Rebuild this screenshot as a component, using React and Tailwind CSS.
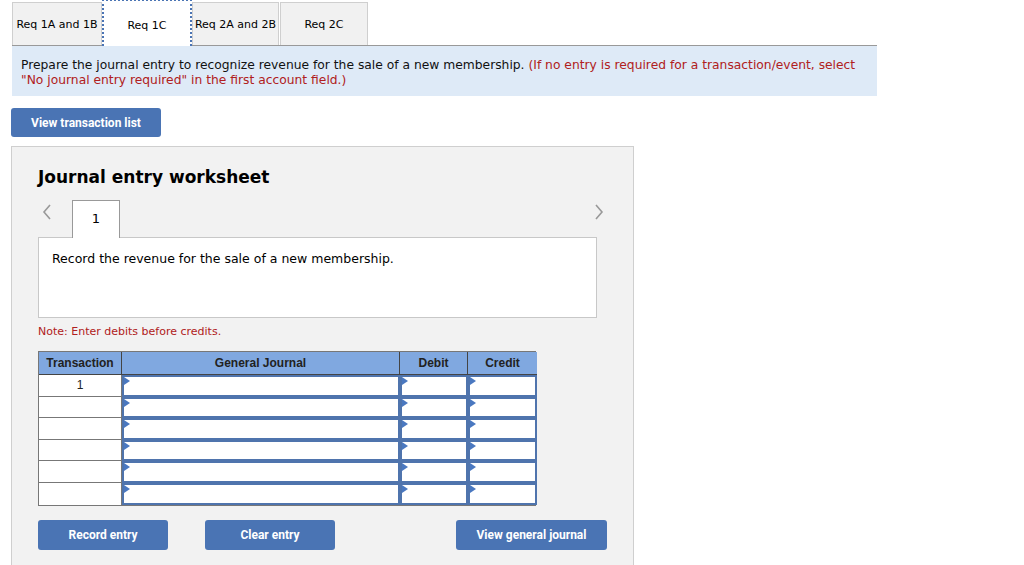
import React from 'react';

const tabs = ['Req 1A and 1B', 'Req 1C', 'Req 2A and 2B', 'Req 2C'];

// маленький треугольник в углу поля ввода
const Marker = () => (
  <span className="absolute left-0 top-0 w-0 h-0 border-t-[4px] border-b-[4px] border-l-[6px] border-t-transparent border-b-transparent border-l-[#4a78c0]" />
);

const InputCell = () => (
  <div className="relative h-full bg-white border-2 border-[#4f74ad]">
    <Marker />
  </div>
);

const Worksheet = () => {
  const rows = ['1', '', '', '', '', ''];

  return (
    <div className="ml-[11px] mt-[9px] w-[623px] h-[420px] bg-[#f2f2f2] border border-[#cfcfcf] pl-[26px] pr-[36px] pt-[18px]">
      <h2 className="text-[17px] font-bold text-black" style={{ fontFamily: '"DejaVu Sans", Verdana, sans-serif' }}>
        Journal entry worksheet
      </h2>

      {/* навигация по записям */}
      <div className="mt-[8px] flex items-end justify-between h-[38px]">
        <div className="flex items-end">
          <svg width="12" height="18" viewBox="0 0 12 18" className="ml-[3px] mb-[16px]">
            <path d="M9 2 L3 9 L9 16" stroke="#999" strokeWidth="1.6" fill="none" />
          </svg>
          <div className="ml-[19px] w-[48px] h-[38px] bg-white border border-[#999] border-b-0 flex items-center justify-center text-[13px] text-black relative z-10 -mb-px">
            1
          </div>
        </div>
        <svg width="12" height="18" viewBox="0 0 12 18" className="mb-[16px] mr-[-8px]">
          <path d="M3 2 L9 9 L3 16" stroke="#999" strokeWidth="1.6" fill="none" />
        </svg>
      </div>

      <div className="h-[81px] bg-white border border-[#c8c8c8] px-[13px] pt-[12px] text-[12.5px] text-black">
        Record the revenue for the sale of a new membership.
      </div>

      <p className="mt-[6px] text-[11px] text-[#b02020]">Note: Enter debits before credits.</p>

      {/* таблица журнала */}
      <div className="mt-[11px] w-[498px] grid grid-cols-[83px_278px_68px_69px] border border-[#777]" style={{ fontFamily: '"Liberation Sans", Arial, sans-serif' }}>
        <div className="h-[23px] bg-[#80a8e0] border-r border-b border-[#444] flex items-center justify-center text-[12px] font-bold text-[#222]">Transaction</div>
        <div className="h-[23px] bg-[#80a8e0] border-r border-b border-[#444] flex items-center justify-center text-[12px] font-bold text-[#222]">General Journal</div>
        <div className="h-[23px] bg-[#80a8e0] border-r border-b border-[#444] flex items-center justify-center text-[12px] font-bold text-[#222]">Debit</div>
        <div className="h-[23px] bg-[#80a8e0] border-b border-[#444] flex items-center justify-center text-[12px] font-bold text-[#222]">Credit</div>
        {rows.map((r, i) => (
          <React.Fragment key={i}>
            <div className={`h-[21.6px] bg-white border-r border-[#777] flex items-center justify-center text-[12px] text-[#222] ${i < rows.length - 1 ? 'border-b' : ''}`}>
              {r}
            </div>
            <div className="h-[21.6px]"><InputCell /></div>
            <div className="h-[21.6px]"><InputCell /></div>
            <div className="h-[21.6px]"><InputCell /></div>
          </React.Fragment>
        ))}
      </div>

      <div className="mt-[14px] w-[569px] flex items-center" style={{ fontFamily: 'Roboto, "Liberation Sans", sans-serif' }}>
        <button className="w-[130px] h-[30px] bg-[#4a74b4] rounded-[3px] text-white text-[12px] font-bold">Record entry</button>
        <button className="ml-[37px] w-[130px] h-[30px] bg-[#4a74b4] rounded-[3px] text-white text-[12px] font-bold">Clear entry</button>
        <button className="ml-auto w-[151px] h-[30px] bg-[#4a74b4] rounded-[3px] text-white text-[12px] font-bold">View general journal</button>
      </div>
    </div>
  );
};

const App = () => {
  return (
    <div className="w-[1024px] h-[565px] overflow-hidden bg-white text-black" style={{ fontFamily: '"DejaVu Sans", Verdana, sans-serif' }}>
      {/* вкладки */}
      <div className="ml-[12px] w-[865px] border-b border-[#999] flex items-end h-[46px]">
        {tabs.map((t, i) =>
          i === 1 ? (
            <div key={t} className="w-[90px] h-[47px] -mb-px bg-white border-2 border-dotted border-[#4a74b4] border-b-0 flex items-center justify-center pt-[5px] text-[11px] text-black relative z-10">
              {t}
            </div>
          ) : (
            <div key={t} className={`h-[43px] bg-[#f1f1f1] border border-[#cfcfcf] border-b-0 flex items-center justify-center pt-[3px] text-[11px] text-black ${i === 0 ? 'w-[90px]' : i === 2 ? 'w-[87px]' : 'w-[88px] ml-[1px]'}`}>
              {t}
            </div>
          )
        )}
      </div>

      <div className="ml-[12px] w-[865px] h-[50px] bg-[#deeaf7] pl-[9px] pt-[12px] text-[12.3px] leading-[15px]">
        <span className="text-[#111]">Prepare the journal entry to recognize revenue for the sale of a new membership. </span>
        <span className="text-[#b02020]">(If no entry is required for a transaction/event, select "No journal entry required" in the first account field.)</span>
      </div>

      <button className="ml-[11px] mt-[12px] w-[150px] h-[29px] bg-[#4a74b4] rounded-[3px] text-white text-[12px] font-bold" style={{ fontFamily: 'Roboto, "Liberation Sans", sans-serif' }}>
        View transaction list
      </button>

      <Worksheet />
    </div>
  );
};

export default App;
